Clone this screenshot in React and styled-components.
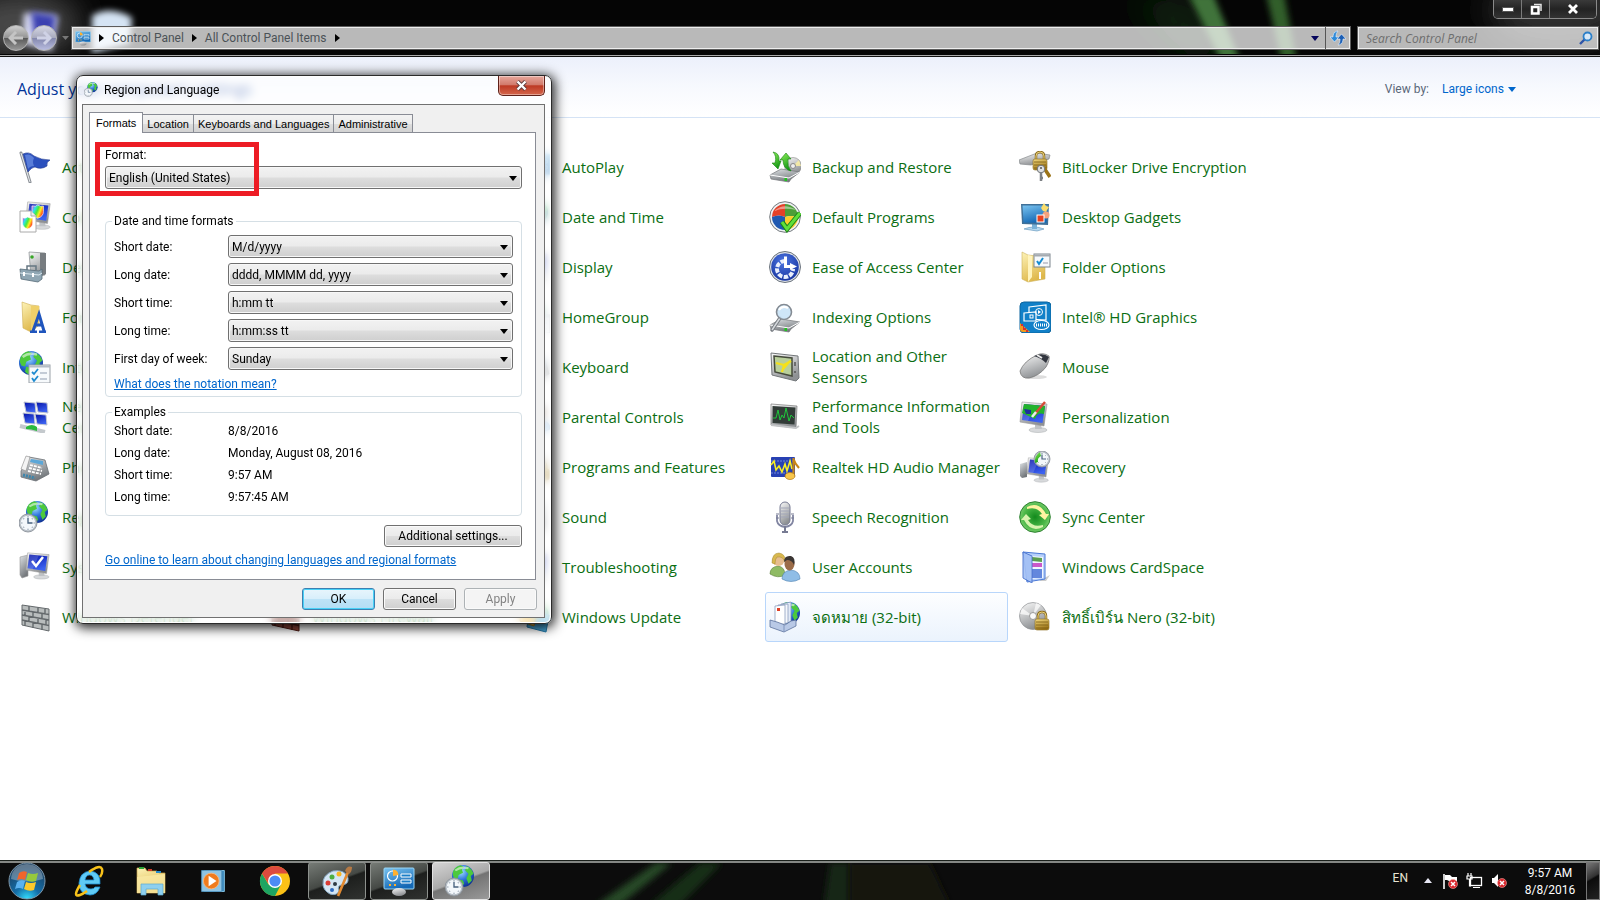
import React from "react";
import styled, { createGlobalStyle, css } from "styled-components";

const UI_FONT = '"Open Sans", "Noto Sans", sans-serif';
const SMALL_FONT = 'Roboto, "Open Sans", sans-serif';

const GlobalStyle = createGlobalStyle`
  *, *::before, *::after { box-sizing: border-box; }
  body { margin: 0; background: #fff; font-family: ${SMALL_FONT}; }
  button, input, select { font-family: inherit; }
`;

const Desktop = styled.div`
  position: relative;
  display: flex;
  flex-direction: column;
  min-height: 100vh;
  overflow: hidden;
`;

/* ---------- Explorer window frame ---------- */

const Frame = styled.header`
  position: relative;
  display: flex;
  flex-direction: column;
  background: #050505;
  border-bottom: 1px solid #111;
  box-shadow: inset 0 -1px 0 #a9a9a9;
  padding-bottom: 6px;
`;

const Aurora = styled.svg`
  position: absolute;
  left: 0;
  top: 0;
  width: 100%;
  height: calc(100% - ${(p) => p.$inset || 0}px);
  margin-top: ${(p) => p.$top || 0}px;
`;

const FrameTop = styled.div`
  position: relative;
  display: flex;
  justify-content: flex-end;
  height: 26px;
  padding-right: 3px;
`;

const WindowControls = styled.div`
  display: flex;
  height: 19px;
  border: 1px solid #8a8a8a;
  border-top: 0;
  border-radius: 0 0 5px 5px;
  overflow: hidden;
`;

const ControlButton = styled.button`
  display: flex;
  align-items: center;
  justify-content: center;
  width: ${(p) => (p.$wide ? "46px" : "28px")};
  padding: 0;
  border: 0;
  border-right: ${(p) => (p.$wide ? "0" : "1px solid #7a7a7a")};
  background: linear-gradient(#3a3a3a, #232323 50%, #333);
`;

const FrameBar = styled.div`
  position: relative;
  display: flex;
  align-items: center;
  height: 24px;
`;

const NavButtons = styled.div`
  display: flex;
  align-items: center;
  gap: 2px;
  width: 71px;
  flex: none;
  padding-left: 3px;
`;

const RoundButton = styled.button`
  display: flex;
  align-items: center;
  justify-content: center;
  width: 26px;
  height: 26px;
  padding: 0;
  border: 1px solid #b5b5b5;
  border-radius: 50%;
  background: ${(p) =>
    p.$tinted
      ? "linear-gradient(#d6d8e4, #a9abc0 48%, #8488ae 52%, #b9bde0)"
      : "linear-gradient(#cfcfcf, #949494 48%, #5a5a5a 52%, #989898)"};
`;

const PlainButton = styled.button`
  display: flex;
  align-items: center;
  justify-content: center;
  width: 12px;
  height: 20px;
  padding: 0;
  border: 0;
  background: none;
`;

const glassField = css`
  display: flex;
  align-items: center;
  height: 24px;
  border: 1px solid #5c5c5c;
  box-shadow: inset 0 0 0 1px #eee;
  background: rgba(255, 255, 255, 0.72);
`;

const AddressBar = styled.nav`
  ${glassField}
  flex: 1;
  padding-left: 3px;
  margin-right: 6px;
`;

const Crumb = styled.a`
  color: #4b5257;
  font-size: 12px;
  line-height: 16px;
  text-decoration: none;
  white-space: nowrap;
`;

const CrumbArrow = styled.span`
  display: flex;
  justify-content: center;
  width: 21px;
`;

const Spacer = styled.div`
  flex: 1;
`;

const RefreshButton = styled.button`
  display: flex;
  align-items: center;
  justify-content: center;
  width: 25px;
  height: 22px;
  margin-left: 4px;
  padding: 0;
  border: 0;
  border-left: 1px solid #555;
  background: none;
`;

const SearchBox = styled.label`
  ${glassField}
  width: 242px;
  margin-right: 1px;
  padding: 0 5px 0 8px;
`;

const SearchInput = styled.input`
  flex: 1;
  min-width: 0;
  padding: 0;
  border: 0;
  outline: 0;
  background: none;
  font-family: ${UI_FONT};
  font-size: 12px;
  font-style: italic;
  &::placeholder { color: #6e6e6e; opacity: 1; }
`;

/* ---------- Control panel content ---------- */

const Content = styled.main`
  flex: 1;
  background: #fff;
`;

const Heading = styled.div`
  display: flex;
  align-items: center;
  height: 61px;
  padding: 3px 82px 0 17px;
  border-bottom: 1px solid #d5e3f5;
  background: linear-gradient(#ecf0fb, #f7f9fe 50%, #fff);
`;

const Title = styled.h1`
  flex: 1;
  margin: 0;
  color: #003399;
  font-family: ${UI_FONT};
  font-size: 16px;
  font-weight: 400;
  line-height: 22px;
`;

const ViewLabel = styled.label`
  margin-right: 13px;
  color: #5a6779;
  font-size: 12px;
`;

const ViewPicker = styled.div`
  position: relative;
  display: flex;
  align-items: center;
`;

const ViewSelect = styled.select`
  appearance: none;
  width: 76px;
  padding: 0;
  border: 0;
  background: none;
  color: #0066cc;
  font-size: 12px;
`;

const OverArrow = styled.svg`
  position: absolute;
  right: ${(p) => p.$right}px;
  top: calc(50% - 2px);
  pointer-events: none;
`;

const ItemGrid = styled.ul`
  display: grid;
  grid-template-columns: repeat(5, 250px);
  grid-auto-rows: 50px;
  margin: 0;
  padding: 24px 0 0 15px;
  list-style: none;
`;

const Item = styled.a`
  display: flex;
  align-items: center;
  gap: 11px;
  width: 243px;
  height: 50px;
  padding: 0 4px 0 3px;
  border: 1px solid ${(p) => (p.$selected ? "#b8d6fb" : "transparent")};
  border-radius: 3px;
  background: ${(p) => (p.$selected ? "linear-gradient(#fdfeff, #ebf3fd)" : "none")};
  color: #0b6e12;
  font-family: ${UI_FONT};
  font-size: 15px;
  line-height: 21px;
  text-decoration: none;
  svg { flex: none; }
`;

/* ---------- Dialog ---------- */

const Dialog = styled.section`
  position: absolute;
  left: 76px;
  top: 75px;
  width: 476px;
  padding: 0 6px 5px 5px;
  border: 1px solid #2b2b2b;
  border-radius: 7px;
  background: rgba(255, 255, 255, 0.6);
  backdrop-filter: blur(4px);
  box-shadow: inset 0 0 0 1px #fff, 1px 2px 12px 2px rgba(0, 0, 0, 0.85);
`;

const TitleBar = styled.div`
  display: flex;
  align-items: flex-start;
  height: 28px;
  padding: 6px 0 0 2px;
`;

const DialogTitle = styled.h2`
  flex: 1;
  margin: 0 0 0 5px;
  color: #000;
  font-size: 12px;
  font-weight: 400;
  line-height: 16px;
`;

const CloseButton = styled.button`
  display: flex;
  align-items: center;
  justify-content: center;
  width: 47px;
  height: 20px;
  margin-top: -6px;
  padding: 0;
  border: 1px solid #5f2019;
  border-top: 0;
  border-radius: 0 0 5px 5px;
  background: linear-gradient(#e7a79c, #d27b6c 45%, #bd3a24 52%, #d4664c);
  box-shadow: inset 0 0 0 1px rgba(255, 255, 255, 0.4);
`;

const Client = styled.div`
  padding: 7px 7px 7px 6px;
  border: 1px solid #717171;
  background: #f0f0f0;
`;

const TabStrip = styled.div`
  position: relative;
  z-index: 1;
  display: flex;
  align-items: flex-end;
  height: 21px;
`;

const Tab = styled.button`
  height: ${(p) => (p.$active ? "21px" : "18px")};
  margin-right: -1px;
  margin-bottom: ${(p) => (p.$active ? "0" : "1px")};
  padding: 0 ${(p) => (p.$active ? "6px" : "4px")};
  border: 1px solid #898c95;
  border-bottom: 0;
  background: ${(p) => (p.$active ? "#fff" : "linear-gradient(#f3f3f3, #ececec 50%, #dedede 52%, #d2d2d2)")};
  font-family: "Liberation Sans", sans-serif;
  font-size: 11px;
  line-height: 16px;
  white-space: nowrap;
`;

const TabPanel = styled.div`
  display: flex;
  flex-direction: column;
  margin: -1px 1px 0 0;
  padding: 14px 13px 11px 15px;
  border: 1px solid #898c95;
  background: #fff;
  font-size: 12px;
  line-height: 16px;
`;

const FormatField = styled.div`
  position: relative;
  display: flex;
  flex-direction: column;
  gap: 3px;
`;

const Marker = styled.div`
  position: absolute;
  left: -10px;
  top: -5px;
  width: 164px;
  height: 54px;
  border: 5px solid #ed1c24;
  pointer-events: none;
`;

const Combo = styled.div`
  position: relative;
  flex: 1;
`;

const ComboSelect = styled.select`
  appearance: none;
  display: block;
  width: 100%;
  height: 23px;
  padding: 0 20px 0 3px;
  border: 1px solid #707070;
  border-radius: 3px;
  background: linear-gradient(#f2f2f2, #ebebeb 48%, #dddddd 52%, #cfcfcf);
  box-shadow: inset 0 0 0 1px #f7f7f7;
  color: #000;
  font-size: 12px;
`;

const Group = styled.fieldset`
  position: relative;
  min-width: 0;
  margin: ${(p) => p.$gap}px 0 0;
  padding: ${(p) => (p.$dense ? "0 8px 7px" : "6px 8px 4px")};
  border: 1px solid #d5dfe5;
  border-radius: 4px;
`;

const Legend = styled.legend`
  margin-left: -2px;
  padding: 0 2px;
  line-height: 16px;
`;

const FieldRow = styled.div`
  display: flex;
  align-items: center;
  margin-bottom: 5px;
`;

const FieldLabel = styled.label`
  width: 114px;
`;

const Examples = styled.dl`
  display: grid;
  grid-template-columns: 114px 1fr;
  margin: 0;
  line-height: 22px;
  dd { margin: 0; }
`;

const HelpLink = styled.a`
  align-self: flex-start;
  display: block;
  margin-top: ${(p) => p.$gap}px;
  color: #0066cc;
  line-height: 16px;
  white-space: nowrap;
`;

const PushButton = styled.button`
  width: ${(p) => (p.$wide ? "138px" : "73px")};
  height: 22px;
  padding: 0;
  border: 1px solid ${(p) => (p.$primary ? "#3c7fb1" : p.disabled ? "#adb2b5" : "#707070")};
  border-radius: 3px;
  background: ${(p) =>
    p.$primary
      ? "linear-gradient(#e8f5fc, #d8effb 48%, #bde3f7 52%, #b3def5)"
      : p.disabled
      ? "#f4f4f4"
      : "linear-gradient(#f2f2f2, #ebebeb 48%, #dddddd 52%, #cfcfcf)"};
  box-shadow: ${(p) => (p.$primary ? "inset 0 0 0 1px #48d1f7" : "inset 0 0 0 1px #fafafa")};
  color: ${(p) => (p.disabled ? "#838383" : "#000")};
  font-size: 12px;
  line-height: 16px;
`;

const PanelAction = styled.div`
  display: flex;
  justify-content: flex-end;
  margin-top: 9px;
`;

const Actions = styled.div`
  display: flex;
  justify-content: flex-end;
  gap: 8px;
  margin-top: 8px;
`;

/* ---------- Taskbar ---------- */

const Taskbar = styled.footer`
  position: relative;
  display: flex;
  height: 40px;
  border-top: 1px solid #1b211c;
  background: #0c0c0c;
  box-shadow: inset 0 2px 0 #858885;
`;

const TaskRow = styled.div`
  position: relative;
  display: flex;
  flex: 1;
  align-items: center;
  gap: 4px;
`;

const StartButton = styled.button`
  width: 56px;
  height: 39px;
  padding: 0 0 0 8px;
  border: 0;
  background: none;
  svg { display: block; }
`;

const TaskButton = styled.button`
  display: flex;
  align-items: center;
  justify-content: center;
  width: 58px;
  height: 38px;
  padding: 0;
  border: 1px solid transparent;
  border-radius: 3px;
  background: none;
  ${(p) =>
    p.$state === "open" &&
    css`
      border-color: #8d918d;
      background: linear-gradient(160deg, #767b76, #454945 48%, #1d1f1d 52%, #303230);
    `}
  ${(p) =>
    p.$state === "active" &&
    css`
      border-color: #e2e2e2;
      background: linear-gradient(160deg, #d4d4d4, #a9a9a9 48%, #737373 52%, #9a9a9a);
    `}
`;

const Tray = styled.div`
  position: relative;
  display: flex;
  align-items: center;
  color: #fff;
  font-size: 12px;
  line-height: 17px;
`;

const Language = styled.span`
  margin: -4px 16px 0 0;
  color: #e8e4d4;
`;

const TrayIcons = styled.div`
  display: flex;
  align-items: center;
  gap: 7px;
`;

const Clock = styled.time`
  width: 62px;
  margin: 3px 5px 0 11px;
  text-align: center;
`;

const ShowDesktop = styled.button`
  width: 14px;
  height: 38px;
  padding: 0;
  border: 1px solid #777;
  background: linear-gradient(150deg, #777, #333 40%, #0c0c0c 45%, #222);
`;

/* ---------- Icons ---------- */

const Gradient = ({ id, from, to }) => (
  <linearGradient id={id} x1="0" y1="0" x2=".4" y2="1">
    <stop offset="0" stopColor={from} />
    <stop offset="1" stopColor={to} />
  </linearGradient>
);

const DefsSvg = styled.svg`
  position: absolute;
`;

const SharedDefs = () => (
  <DefsSvg width="0" height="0" aria-hidden="true">
    <defs>
      <Gradient id="screen" from="#0512a8" to="#3c62f0" />
      <Gradient id="silver" from="#fbfbfb" to="#8e9194" />
      <Gradient id="steel" from="#dfe3e6" to="#75797d" />
      <Gradient id="folder" from="#fdf3b8" to="#dfb84b" />
      <Gradient id="gold" from="#f5dc82" to="#9c7417" />
      <Gradient id="blue" from="#79c3f0" to="#1569b5" />
      <Gradient id="green" from="#8ff05a" to="#189a17" />
      <linearGradient id="rainbow" x1="0" x2="1" y1="0" y2=".5">
        <stop offset="0" stopColor="#ff2ad0" />
        <stop offset=".3" stopColor="#2de0f0" />
        <stop offset=".55" stopColor="#4dea35" />
        <stop offset=".75" stopColor="#ffee22" />
        <stop offset="1" stopColor="#ff3a1c" />
      </linearGradient>
      <radialGradient id="ball" cx=".4" cy=".3" r=".75">
        <stop offset="0" stopColor="#a6e6ff" />
        <stop offset=".5" stopColor="#2f74dc" />
        <stop offset="1" stopColor="#0b2b8c" />
      </radialGradient>
      <radialGradient id="orb" cx=".5" cy="1" r=".9">
        <stop offset="0" stopColor="#35e0ff" />
        <stop offset=".4" stopColor="#146ea8" />
        <stop offset="1" stopColor="#1b3f60" />
      </radialGradient>
      <radialGradient id="access" cx=".45" cy=".3" r=".8">
        <stop offset="0" stopColor="#4b74e0" />
        <stop offset="1" stopColor="#132f9a" />
      </radialGradient>
      <radialGradient id="sync" cx=".5" cy=".5" r=".6">
        <stop offset="0" stopColor="#128a1c" />
        <stop offset=".6" stopColor="#4cb848" />
        <stop offset="1" stopColor="#8fd97d" />
      </radialGradient>
      <filter id="soft" x="-150%" y="-150%" width="400%" height="400%"><feGaussianBlur stdDeviation="3" /></filter>
      <filter id="haze" x="-150%" y="-150%" width="400%" height="400%"><feGaussianBlur stdDeviation="16" /></filter>
    </defs>
  </DefsSvg>
);

const Globe = ({ x, y, r }) => (
  <g transform={`translate(${x} ${y}) scale(${r / 10})`}>
    <circle r="10" fill="url(#ball)" />
    <path d="M-9-4Q-7-9-2-9.700L1-8-1-6 0-3-4-1-5 3-8 2Q-10-1-9-4ZM3-9Q8-7 9.500-2L7 0 8 4 5 7 3 2 5-2 2-5ZM-4 3L0 4 1 7-1 9.500Q-4 9-5 7Z" fill="#4cc93c" />
    <path d="M-7-5Q-2-9 5-7" stroke="#fff" strokeOpacity=".55" strokeWidth="2" fill="none" />
  </g>
);

const ClockFace = ({ x, y, r }) => (
  <g transform={`translate(${x} ${y}) scale(${r / 8})`}>
    <circle r="8" fill="#b9c0c8" stroke="#8b929a" strokeWidth=".8" />
    <circle r="6.500" fill="#f3f7fb" />
    <path d="M0-6V-5M0 5V6M-6 0H-5M5 0H6M-4-4L-3.500-3.500M4-4L3.500-3.500M-4 4L-3.500 3.500M4 4L3.500 3.500" stroke="#778799" />
    <path d="M0-4.500V0H4" stroke="#48617e" strokeWidth="1.200" fill="none" />
  </g>
);

const Monitor = ({ fill = "url(#screen)" }) => (
  <g>
    <ellipse cx="19" cy="29" rx="9" ry="2.500" fill="#d7d9db" stroke="#a7aaad" strokeWidth=".5" />
    <path d="M16 23L22 24 23 28H16Z" fill="#bfc2c5" />
    <path d="M3 1L28 3 25 25 1 21Z" fill="url(#silver)" stroke="#999" strokeWidth=".6" />
    <path d="M5 3L26 5 23.500 22 3 19Z" fill={fill} />
    <path d="M5 3L16 4 9 20 3 19Z" fill="#fff" opacity=".16" />
  </g>
);

const Drive = () => (
  <g>
    <path d="M1 24L12 18 31 21 22 28 20 31 2 28Z" fill="url(#steel)" stroke="#737679" strokeWidth=".7" />
    <path d="M1 24L20 27 31 21" stroke="#fff" fill="none" />
    <rect x="15.500" y="27" width="2.500" height="3" fill="#21c421" />
  </g>
);

const Padlock = ({ x, y }) => (
  <g transform={`translate(${x} ${y})`}>
    <path d="M3 8V5Q3 1 7 1T11 5V8" fill="none" stroke="#8c6d20" strokeWidth="2.500" />
    <path d="M3 8V5Q3 1 7 1T11 5V8" fill="none" stroke="#ead279" strokeWidth="1" />
    <rect y="8" width="14" height="11" rx="2" fill="url(#gold)" stroke="#8c6d20" strokeWidth=".6" />
    <path d="M1 11H13M1 14H13M1 17H13" stroke="#795b12" strokeWidth=".8" />
  </g>
);

const Shield = ({ x, y, s = 1 }) => (
  <path transform={`translate(${x} ${y}) scale(${s})`} d="M0 1Q4 2 6 0 9 2 12 1V7Q12 12 6 14 0 12 0 7Z" fill="url(#rainbow)" stroke="#fff" strokeWidth=".7" />
);

const Bricks = ({ fill, stroke }) => (
  <g>
    <path d="M3 4L30 8V30L3 24Z" fill={fill} stroke={stroke} />
    <path d="M3 9L30 13.500M3 14L30 19M3 19L30 24.500M10 5V10M19 6.500V11.500M26 8V13M6 9.500V14.500M14 11V16M23 12.500V17.500M10 15V20M19 17V22M27 18V24M6 20V25M14 21.500V27M23 23.500V29" stroke={stroke} strokeWidth="1.400" />
  </g>
);

const PanelArt = () => (
  <g>
    <rect x="1" y="3" width="30" height="21" rx="1" fill="url(#blue)" stroke="#9bd5f3" />
    <circle cx="9.500" cy="11" r="5" fill="none" stroke="#fff" strokeWidth="1.200" />
    <path d="M10 11V4.500A6 6 0 0 1 15.500 10Z" fill="#ffb02e" />
    <path d="M18 9H28V12H18ZM18 15H28V18H18Z" fill="#1a7fc8" stroke="#fff" />
    <path d="M6 20H8M11 20H13" stroke="#ffb02e" strokeWidth="2" />
    <ellipse cx="16" cy="27" rx="7" ry="4" fill="url(#silver)" />
  </g>
);

const art = {
  flag: (
    <g>
      <path d="M2 2L11 31" stroke="#8d9298" strokeWidth="3" strokeLinecap="round" />
      <path d="M2 2L11 31" stroke="#e8ebee" strokeWidth="1" />
      <path d="M4 3Q10 0 15 5 22 9 31 9 27 11 28 15 22 19 16 16 13 16 9 21Z" fill="#2b50bd" stroke="#1c368d" strokeWidth=".6" />
      <path d="M6 4Q11 2 15 7 13 11 15 15 11 15 9 18Z" fill="#789be9" opacity=".6" />
    </g>
  ),
  color: (
    <g>
      <g transform="translate(6 0) scale(.9)"><Monitor /></g>
      <Shield x="13" y="4" s=".95" />
      <path d="M1 10H12L17 15V31H1Z" fill="#fff" stroke="#aaa" />
      <path d="M12 10V15H17" fill="#eee" stroke="#aaa" />
      <Shield x="3.500" y="16" s=".85" />
    </g>
  ),
  device: (
    <g>
      <path d="M10 1L26 2V24L12 26Z" fill="url(#silver)" stroke="#84898d" strokeWidth=".7" />
      <path d="M21 2L27 2V23L21 25Z" fill="#777c80" />
      <circle cx="13" cy="6" r="1.800" fill="#39a628" />
      <path d="M8 19V15H17V19" stroke="#667782" strokeWidth="1.500" fill="none" />
      <path d="M1 18L20 20 23 18V28L19 31 2 28Z" fill="#8fa6b3" stroke="#576b77" strokeWidth=".8" />
      <path d="M1 22L20 24 23 22" stroke="#dce9f0" fill="none" />
      <path d="M5 21V25M14 22V26" stroke="#fff" strokeWidth="2" />
    </g>
  ),
  fonts: (
    <g>
      <path d="M3 1L12 4 20 5 20 24 12 31 4 27Z" fill="url(#folder)" stroke="#cfae54" strokeWidth=".6" />
      <path d="M12 5V31L20 24V5Z" fill="#efd06a" />
      <path d="M11 31H18M20 31H27M14 30L20 13 25 30M16 24H23" stroke="#1f55bd" strokeWidth="3" fill="none" />
    </g>
  ),
  internet: (
    <g>
      <Globe x={12} y={12} r={12} />
      <rect x="10" y="14" width="21" height="18" fill="#f7fafc" stroke="#9aa1a8" />
      <path d="M10 15.500H31" stroke="#b5bdc5" strokeWidth="2" />
      <path d="M13 21L15 23 19 18M13 27L15 30 19 25" stroke="#1e8bd0" strokeWidth="1.800" fill="none" />
      <path d="M21 22H28M21 28H28" stroke="#8f9db0" />
    </g>
  ),
  network: (
    <g>
      {[[5, 1], [17, 1], [4, 12], [16, 13]].map(([x, y]) => (
        <path key={`${x}-${y}`} d={`M${x} ${y}l11 1 1 10-10-1z`} fill="url(#screen)" stroke="#c4c9d4" />
      ))}
      <path d="M1 25L26 31" stroke="#c4c9cd" strokeWidth="4" />
      <path d="M7 26Q13 22 18 26V30Q12 28 7 28Z" fill="#29ba3d" />
    </g>
  ),
  phone: (
    <g>
      <path d="M2 20L10 6 26 9 30 23 17 30 2 26Z" fill="url(#steel)" stroke="#696e73" strokeWidth=".8" />
      <path d="M12 8L24 10 24 14 11 11Z" fill="#5ba7d8" />
      <path d="M2 18L7 5 11 6 7 20Z" fill="#f4f4f4" stroke="#888" strokeWidth=".6" />
      <path d="M11 14L23 17M10 17L23 20M9 20L22 23" stroke="#fff" strokeWidth="1.800" strokeDasharray="3 1" />
      <path d="M4 24L16 27" stroke="#3c86ad" strokeWidth="3" strokeDasharray="2 1" />
    </g>
  ),
  region: (
    <g>
      <Globe x={18} y={11} r={11} />
      <ClockFace x={9} y={22} r={9} />
    </g>
  ),
  system: (
    <g>
      <path d="M1 6L9 4V25L3 27 1 24Z" fill="url(#steel)" stroke="#999" strokeWidth=".6" />
      <g transform="translate(6 1) scale(.86)"><Monitor /></g>
      <path d="M13 10L17 15 24 6" stroke="#fff" strokeWidth="2.500" fill="none" />
    </g>
  ),
  defender: <Bricks fill="#b9bdbd" stroke="#63686b" />,
  firewall: <Bricks fill="#94473b" stroke="#4f1c15" />,
  update: (
    <g>
      <path d="M10 10L30 14 27 31 8 26Z" fill="#4aa9da" stroke="#247daf" />
      <path d="M2 5L18 9 15 25 1 20Z" fill="#f3c14c" stroke="#b6841c" />
      <path d="M18 5A8 8 0 0 1 28 13" stroke="#39a941" strokeWidth="3" fill="none" />
    </g>
  ),
  display: <Monitor />,
  generic: <PanelArt />,
  sound: (
    <g>
      <rect x="9" y="2" width="16" height="28" rx="2" fill="url(#steel)" />
      <circle cx="17" cy="20" r="6" fill="#444" />
      <circle cx="17" cy="8" r="3" fill="#555" />
    </g>
  ),
  backup: (
    <g>
      <circle cx="24" cy="15" r="8.500" fill="url(#silver)" stroke="#888" strokeWidth=".6" />
      <path d="M24 15L30 9 32 15Z" fill="#fff2a0" opacity=".8" />
      <circle cx="24" cy="15" r="2.500" fill="#eee" stroke="#888" />
      <Drive />
      <path d="M4 1Q11 2 10 10H12L9 18 3 12H6Q8 5 4 1Z" fill="url(#green)" stroke="#158211" strokeWidth=".6" />
      <path d="M17 2L22 8 19 8Q18 15 22 20 14 18 14 9L11 9Z" fill="url(#green)" stroke="#158211" strokeWidth=".6" />
    </g>
  ),
  defaults: (
    <g>
      <circle cx="16" cy="16" r="15.300" fill="#eef1f3" stroke="#74797d" />
      <path d="M16 16V3A13 13 0 0 0 3 16Q10 13 16 16Z" fill="#e44128" />
      <path d="M16 16V3A13 13 0 0 1 29 16Q22 14 16 16Z" fill="#4d9e38" />
      <path d="M16 16V29A13 13 0 0 1 3 16Q10 13 16 16Z" fill="#1f59b1" />
      <path d="M16 16V29A13 13 0 0 0 29 16Q22 14 16 16Z" fill="#fbcf2c" />
      <path d="M5 10Q15 1 27 9 15 6 5 10Z" fill="#fff" opacity=".45" />
      <path d="M13 21L18 28 31 12" stroke="#1c8419" strokeWidth="5" fill="none" />
      <path d="M13 21L18 28 31 12" stroke="#5fe03a" strokeWidth="3" fill="none" />
    </g>
  ),
  ease: (
    <g>
      <circle cx="16" cy="16" r="15.500" fill="#dfe3e8" stroke="#6b737d" />
      <circle cx="16" cy="16" r="13.800" fill="url(#access)" />
      <path d="M16 10A8 8 0 1 0 24 18" fill="none" stroke="#e9effc" strokeWidth="4" strokeDasharray="4.500 1.400" />
      <path d="M16.500 5.500V15.500H22" stroke="#fff" strokeWidth="3" fill="none" />
      <path d="M21 12L28 15.500 21 19Z" fill="#fff" />
    </g>
  ),
  indexing: (
    <g>
      <Drive />
      <path d="M11 17L3 29" stroke="#777c82" strokeWidth="3.500" strokeLinecap="round" />
      <path d="M11 17L3 29" stroke="#d6dade" strokeWidth="1.500" />
      <circle cx="15" cy="11" r="7.500" fill="#c9e3f7" fillOpacity=".9" stroke="#848b93" strokeWidth="1.600" />
      <path d="M10 9Q13 4 19 7" stroke="#fff" strokeWidth="2" fill="none" />
    </g>
  ),
  location: (
    <g>
      <path d="M2 2L29 5 30 27 27 30 3 24Z" fill="url(#silver)" stroke="#73777a" />
      <path d="M5 5L23 7V25L6 21Z" fill="#b9cf9b" stroke="#454b3b" strokeWidth="1.500" />
      <path d="M7 12L15 14 22 10M15 14L13 21M14 18L21 10" stroke="#f5e11a" strokeWidth="2.200" fill="none" />
      <path d="M26 11V15M26 20V22" stroke="#555" strokeWidth="1.500" />
    </g>
  ),
  performance: (
    <g>
      <path d="M2 3L28 5 27 27 2 24Z" fill="url(#silver)" stroke="#777" strokeWidth=".7" />
      <path d="M3.500 5L26.500 6.500 25.500 23.500 3.500 22Z" fill="#323c38" />
      <path d="M4 17L7 17 9 9 11 19 13 14 15 17 17 7 20 20 22 14 25 17" stroke="#1fc73c" strokeWidth="1" fill="none" />
      <path d="M2 24L27 27 30 25" stroke="#c2c4c6" strokeWidth="1.800" fill="none" />
    </g>
  ),
  realtek: (
    <g>
      <rect x="2" y="6" width="24" height="20" rx="1" fill="#2740b3" />
      <path d="M2 10H26M2 22H26" stroke="#7386dc" strokeDasharray="2 1" />
      <path d="M2 14L5 10 7 19 10 15 13 21 16 13 18 20 21 10 23 18" stroke="#f7ee24" strokeWidth="1.600" fill="none" />
      <path d="M24.500 7V24M24.500 8Q26 13 30 17" stroke="#c88618" strokeWidth="2.200" fill="none" />
      <ellipse cx="21" cy="25" rx="5" ry="3.500" fill="#f8c64b" stroke="#b5770e" strokeWidth=".7" />
    </g>
  ),
  speech: (
    <g>
      <path d="M8 14V20Q9 25 16 26 23 25 24 20V14" stroke="#8286a2" strokeWidth="1.800" fill="none" />
      <path d="M16 25V30M13 31H19" stroke="#777b93" strokeWidth="2" />
      <rect x="11" y="1" width="10" height="23" rx="5" fill="url(#silver)" stroke="#777b93" />
      <path d="M12 7H20M12 10H20M12 13H20M12 16H20" stroke="#a2a5b8" strokeWidth="1.200" />
      <path d="M7 13H10M22 13H25M7 17H10M22 17H25" stroke="#777b93" />
    </g>
  ),
  users: (
    <g>
      <path d="M1 23Q1 16 9 15 16 16 16 24 9 28 1 23Z" fill="#8fbb64" stroke="#587d35" strokeWidth=".6" />
      <circle cx="9.500" cy="9" r="6" fill="#e6bd8f" />
      <path d="M3 12Q3 2 10 2 17 3 16 11 14 5 8 6 6 8 6 13Z" fill="#d8b84f" stroke="#a38528" strokeWidth=".5" />
      <path d="M13 28Q13 20 22 19 31 20 31 28 22 33 13 28Z" fill="#8fbde6" stroke="#4c7fb0" strokeWidth=".6" />
      <ellipse cx="20.500" cy="13" rx="5" ry="6.500" fill="#9b6c49" />
      <path d="M15 11Q15 4 22 5 27 7 25 14 23 9 18 9Z" fill="#3b3634" />
    </g>
  ),
  mail: (
    <g>
      <Globe x={20} y={12} r={11} />
      <path d="M12 3L22 1V21L12 23Z" fill="#e2eaf6" stroke="#7d91b4" strokeWidth=".7" />
      <path d="M9 4L19 3V22L9 23Z" fill="#f4f7fc" stroke="#7d91b4" strokeWidth=".7" />
      <path d="M6 5L16 4V23L6 24Z" fill="#fff" stroke="#7d91b4" strokeWidth=".7" />
      <rect x="8" y="7" width="3" height="3" fill="#e04026" />
      <path d="M1 19L8 21 16 24 22 20 27 19 27 25 15 31 1 26Z" fill="#b9c9e6" stroke="#5c719c" strokeWidth=".8" />
      <path d="M15 31V24" stroke="#8095bd" />
    </g>
  ),
  bitlocker: (
    <g>
      <path d="M0 9L18 2 31 4 30 8 12 14 1 13Z" fill="url(#silver)" stroke="#85898d" strokeWidth=".7" />
      <Padlock x={14} y={0} />
      <path d="M25 17L31 26" stroke="#9b7317" strokeWidth="3.500" />
      <circle cx="22" cy="18" r="3.800" fill="#dfe2e5" stroke="#6d7175" />
      <path d="M22 21V30M22 27H24" stroke="#7d8185" strokeWidth="2.500" />
      <circle cx="22" cy="17" r="1" fill="#555" />
    </g>
  ),
  gadgets: (
    <g>
      <path d="M5 28Q15 24 25 28L18 30Z" fill="#b5d8ee" stroke="#5a91b8" strokeWidth=".6" />
      <rect x="13" y="22" width="5" height="6" fill="#79b1d7" />
      <path d="M2 3L30 3 29 24 3 23Z" fill="#3f7098" />
      <path d="M3.500 4.500L28.500 4.500 27.500 22 4.500 21.500Z" fill="url(#blue)" />
      <path d="M25 2L27 5 30 6 28 9 27 11 24 10 22 7Z" fill="#f8dc6b" />
      <circle cx="27" cy="14" r="3.500" fill="#f3a27d" />
      <rect x="18" y="14" width="7" height="7" fill="#e7411f" stroke="#fff" />
    </g>
  ),
  folderOptions: (
    <g>
      <path d="M3 1L9 4 26 6V28L9 31 3 28Z" fill="url(#folder)" stroke="#cdb15c" strokeWidth=".6" />
      <path d="M9 4V31L13 26V5Z" fill="#fff4be" />
      <rect x="15" y="3" width="16" height="13" fill="#f6f9fc" stroke="#7d858d" />
      <path d="M15 4.500H31" stroke="#a5aab0" strokeWidth="2" />
      <path d="M18 10L20 13 24 7" stroke="#168cd1" strokeWidth="2" fill="none" />
      <path d="M24 12H29" stroke="#99a" />
      <path d="M21 21V28" stroke="#fff" strokeWidth="2" />
    </g>
  ),
  intel: (
    <g>
      <rect x="1" y="1" width="31" height="31" rx="4" fill="#1180c8" stroke="#0c659e" />
      <path d="M1 22L11 31H4Q1 31 1 28Z" fill="#f29b1d" />
      <path d="M2 24H4M4 28H7M7 30H9M4 26H5" stroke="#d92f2f" strokeWidth="2" />
      <path d="M10 6L27 4V19L10 18Z" fill="none" stroke="#fff" strokeWidth="1.200" />
      <path d="M5 12L17 11V20H5Z" fill="#1180c8" stroke="#fff" strokeWidth="1.200" />
      <circle cx="20" cy="11" r="3.500" fill="none" stroke="#fff" />
      <path d="M19 9L22 11 19 13Z" fill="#fff" />
      <rect x="11" y="14" width="3" height="3" fill="none" stroke="#fff" />
      <ellipse cx="22.500" cy="24" rx="7.500" ry="4.500" fill="none" stroke="#fff" strokeWidth="1.200" />
      <path d="M17 24H28" stroke="#fff" strokeWidth="3" strokeDasharray="1 1" />
    </g>
  ),
  mouse: (
    <g>
      <ellipse cx="16" cy="26" rx="12" ry="2" fill="#ddd" />
      <path d="M1 20Q5 10 18 4 24 1 30 5 31 9 27 16 20 25 10 27 2 28 1 20Z" fill="url(#silver)" stroke="#777" strokeWidth=".8" />
      <path d="M15 5Q24 1 30 6L27 12Q22 7 15 5Z" fill="#32363f" />
      <path d="M18 4L23 7" stroke="#eee" strokeWidth="2" />
    </g>
  ),
  personalization: (
    <g>
      <Monitor />
      <path d="M5 3L26 5 25 13Q18 11 16 18L3 12Z" fill="#22b32c" />
      <path d="M5 8L12 9 12 13 7 13Z" fill="#1b2f9c" />
      <path d="M26 1L15 14" stroke="#d64b37" strokeWidth="2.500" />
      <path d="M17 11L13 16" stroke="#e9edf1" strokeWidth="2.500" />
    </g>
  ),
  recovery: (
    <g>
      <path d="M1 13L8 11V26L3 27 1 25Z" fill="url(#steel)" />
      <g transform="translate(7 6) scale(.8)"><Monitor /></g>
      <ClockFace x={23} y={8} r={8} />
      <path d="M16 12Q15 5 21 1L22 5Q18 7 19 11Z" fill="url(#green)" />
    </g>
  ),
  sync: (
    <g>
      <circle cx="16" cy="16" r="15.300" fill="url(#sync)" stroke="#2b7f2e" />
      <path d="M8 6Q20 0 27 13L30 13 26 19 20 14 23 13Q18 5 8 8Z" fill="#fff3a1" />
      <path d="M24 26Q12 32 5 19L2 19 7 13 12 18 9 19Q14 27 24 24Z" fill="#d8f3ae" />
    </g>
  ),
  cardspace: (
    <g>
      <path d="M20 30L31 24 27 30Z" fill="#ccc" />
      <path d="M4 1L26 3V28L8 31Z" fill="#b6d0fa" stroke="#4b79d6" />
      <path d="M12 5L24 6V27L12 28Z" fill="#f1f6ff" />
      <path d="M13 6L23 7V11L13 10Z" fill="#5b9f4f" />
      <path d="M13 12L23 12V16L13 16Z" fill="#cb58c9" />
      <path d="M13 18H23V27H13Z" fill="#6387dd" />
      <path d="M4 1L13 5V32L4 27Z" fill="#a3c0f5" stroke="#4671cd" opacity=".9" />
    </g>
  ),
  nero: (
    <g>
      <circle cx="14" cy="15" r="13.500" fill="url(#silver)" stroke="#8c8f92" strokeWidth=".7" />
      <path d="M14 15L3 7 1 13ZM14 15L17 2 22 4Z" fill="#fff" opacity=".7" />
      <circle cx="14" cy="15" r="3.500" fill="#fafafa" stroke="#999" />
      <Padlock x={16} y={10} />
    </g>
  ),
  folderTask: (
    <g>
      <path d="M2 3H10L12 6H22L24 8H30V28H2Z" fill="url(#folder)" stroke="#c7a54b" strokeWidth=".7" />
      <path d="M4 3H9" stroke="#2aa338" strokeWidth="2" />
      <path d="M13 5H17" stroke="#ce3a28" strokeWidth="2" />
      <path d="M21 7H26" stroke="#2388cb" strokeWidth="2" />
      <path d="M2 12L30 9V28H2Z" fill="#f9e9a4" opacity=".8" />
      <path d="M6 30V19H28V30H23V24H11V30Z" fill="#8fd0ef" stroke="#5ba9cf" strokeWidth=".7" />
    </g>
  ),
  ie: (
    <g>
      <path d="M27 19H12Q13 24 18 24 21 24 22 22H27Q24 30 17 30 6 29 6 18 7 7 17 6 28 7 27 19ZM12 15H21Q20 10 16.500 10 13 10 12 15Z" fill="#5fcbf5" stroke="#1d8ed2" strokeWidth=".8" />
      <path d="M7 20Q-1 33 7 30 10 29 14 26M16 7Q27-1 29 4 30 8 27 12" stroke="#f8c21a" strokeWidth="2.500" fill="none" />
    </g>
  ),
  media: (
    <g>
      <path d="M6 4H29V28H6Z" fill="#3c89bd" stroke="#8ccbea" />
      <path d="M3 4H26V28H3Z" fill="#8fc4e3" stroke="#5194bd" />
      <circle cx="14" cy="16" r="9" fill="#f07b1d" stroke="#f8b77d" />
      <path d="M11 10L20 16 11 22Z" fill="#fff" />
    </g>
  ),
  chrome: (
    <g>
      <circle cx="16" cy="16" r="15" fill="#fbc116" />
      <path d="M3 8.500A15 15 0 0 0 16 31L22 19.500 9.500 19.500Z" fill="#1da462" />
      <path d="M3 8.500A15 15 0 0 1 29 8.500H16L9 18Z" fill="#dd4b3e" />
      <circle cx="16" cy="16" r="7" fill="#fff" />
      <circle cx="16" cy="16" r="5.600" fill="#4c8bf5" />
    </g>
  ),
  paint: (
    <g>
      <path d="M2 20Q1 10 12 6 24 4 27 13 28 20 20 20 16 21 18 26 16 31 9 29 3 26 2 20Z" fill="#d4e6f4" stroke="#87a9c3" />
      <circle cx="7" cy="18" r="2.500" fill="#d93d35" />
      <circle cx="11" cy="12" r="2.500" fill="#4dae41" />
      <circle cx="18" cy="9" r="2.500" fill="#f7b523" />
      <circle cx="14" cy="19" r="2" fill="#2d3a44" />
      <circle cx="11" cy="25" r="2" fill="#2b69c0" />
      <path d="M17 31L27 7" stroke="#e28a31" strokeWidth="2.600" />
      <path d="M24 6Q26 0 31 2 31 7 28 9Z" fill="#b57a45" />
    </g>
  ),
};

const Icon = ({ name, size = 32 }) => (
  <svg width={size} height={size} viewBox="0 0 32 32" fill="none" aria-hidden="true">
    {art[name]}
  </svg>
);

const RightArrow = () => (
  <svg width="5" height="8" viewBox="0 0 5 8"><path d="M0 0L5 4 0 8Z" fill="#000" /></svg>
);

const DownArrow = ({ color = "#000", right }) => (
  <OverArrow $right={right} width="8" height="5" viewBox="0 0 8 5">
    <path d="M0 0H8L4 5Z" fill={color} />
  </OverArrow>
);

const RedBadge = ({ x, y }) => (
  <g transform={`translate(${x} ${y})`}>
    <circle r="4.500" fill="#d8262c" stroke="#f3a4a0" strokeWidth=".6" />
    <path d="M-2-2L2 2M2-2L-2 2" stroke="#fff" strokeWidth="1.500" />
  </g>
);

/* ---------- Data ---------- */

const ITEMS = [
  ["Action Center", "flag"], ["Administrative Tools", "generic"], ["AutoPlay", "generic"], ["Backup and Restore", "backup"], ["BitLocker Drive Encryption", "bitlocker"],
  ["Color Management", "color"], ["Credential Manager", "generic"], ["Date and Time", "region"], ["Default Programs", "defaults"], ["Desktop Gadgets", "gadgets"],
  ["Device Manager", "device"], ["Devices and Printers", "generic"], ["Display", "display"], ["Ease of Access Center", "ease"], ["Folder Options", "folderOptions"],
  ["Fonts", "fonts"], ["Getting Started", "generic"], ["HomeGroup", "internet"], ["Indexing Options", "indexing"], ["Intel® HD Graphics", "intel"],
  ["Internet Options", "internet"], ["Java", "generic"], ["Keyboard", "phone"], ["Location and Other Sensors", "location"], ["Mouse", "mouse"],
  ["Network and Sharing Center", "network"], ["Notification Area Icons", "generic"], ["Parental Controls", "users"], ["Performance Information and Tools", "performance"], ["Personalization", "personalization"],
  ["Phone and Modem", "phone"], ["Power Options", "generic"], ["Programs and Features", "nero"], ["Realtek HD Audio Manager", "realtek"], ["Recovery", "recovery"],
  ["Region and Language", "region"], ["RemoteApp and Desktop", "generic"], ["Sound", "sound"], ["Speech Recognition", "speech"], ["Sync Center", "sync"],
  ["System", "system"], ["Taskbar and Start Menu", "generic"], ["Troubleshooting", "display"], ["User Accounts", "users"], ["Windows CardSpace", "cardspace"],
  ["Windows Defender", "defender"], ["Windows Firewall", "firewall"], ["Windows Update", "update"], ["จดหมาย (32-bit)", "mail"], ["สิทธิ์เบิร์น Nero (32-bit)", "nero"],
];

const FORMATS = [
  ["short-date", "Short date:", "M/d/yyyy"],
  ["long-date", "Long date:", "dddd, MMMM dd, yyyy"],
  ["short-time", "Short time:", "h:mm tt"],
  ["long-time", "Long time:", "h:mm:ss tt"],
  ["first-day", "First day of week:", "Sunday"],
];

const EXAMPLES = [
  ["Short date:", "8/8/2016"],
  ["Long date:", "Monday, August 08, 2016"],
  ["Short time:", "9:57 AM"],
  ["Long time:", "9:57:45 AM"],
];

const TABS = ["Formats", "Location", "Keyboards and Languages", "Administrative"];

const TASKS = [
  ["Internet Explorer", "ie"],
  ["Windows Explorer", "folderTask"],
  ["Media Player", "media", "", 28],
  ["Chrome", "chrome"],
  ["Paint", "paint", "open"],
  ["Control Panel", "generic", "open"],
  ["Region and Language", "region", "active"],
];

const ComboBox = ({ id, value }) => (
  <Combo>
    <ComboSelect id={id} defaultValue={value}>
      <option>{value}</option>
    </ComboSelect>
    <DownArrow right={5} />
  </Combo>
);

/* ---------- Sections ---------- */

const ExplorerFrame = () => (
  <Frame>
    <Aurora $inset={2} viewBox="0 0 1600 55" preserveAspectRatio="none" aria-hidden="true">
      <ellipse cx="20" cy="25" rx="60" ry="34" fill="#4a4a4a" filter="url(#haze)" />
      <ellipse cx="1560" cy="10" rx="70" ry="34" fill="#333" filter="url(#haze)" />
      <path d="M1130 0H1190L1222 57H1190Z" fill="#10280f" filter="url(#haze)" />
      <path d="M24 13L58 16 52 52 22 44Z" fill="#d8daf2" filter="url(#soft)" />
      <path d="M31 12L56 16 52 42 34 36Z" fill="#3a3fb0" filter="url(#soft)" />
      <path d="M92 16Q110 5 132 18L130 44 92 54Z" fill="#d5e4f4" filter="url(#soft)" />
      <path d="M1188-6H1213L1241 64H1222Z" fill="#41733b" filter="url(#soft)" />
      <path d="M1266-6H1284L1297 64H1282Z" fill="#315f2c" filter="url(#soft)" />
    </Aurora>
    <FrameTop>
      <WindowControls>
        <ControlButton aria-label="Minimize">
          <svg width="12" height="5" viewBox="0 0 12 5"><rect x=".500" y=".500" width="11" height="4" fill="#fff" stroke="#555" /></svg>
        </ControlButton>
        <ControlButton aria-label="Restore">
          <svg width="12" height="12" viewBox="0 0 12 12" fill="none"><path d="M4 1.500H11V8" stroke="#e4e4e4" strokeWidth="1.500" /><rect x="2" y="4" width="6.500" height="6.500" stroke="#fff" strokeWidth="2.500" /></svg>
        </ControlButton>
        <ControlButton $wide aria-label="Close">
          <svg width="12" height="10" viewBox="0 0 12 10"><path d="M2 1L10 9M10 1L2 9" stroke="#fff" strokeWidth="2.800" /></svg>
        </ControlButton>
      </WindowControls>
    </FrameTop>
    <FrameBar>
      <NavButtons>
        <RoundButton aria-label="Back">
          <svg width="16" height="14" viewBox="0 0 16 14"><path d="M8 1L2 7 8 13M2 7H15" stroke="#c4c4c4" strokeWidth="3" fill="none" /></svg>
        </RoundButton>
        <RoundButton $tinted aria-label="Forward">
          <svg width="16" height="14" viewBox="0 0 16 14"><path d="M8 1L14 7 8 13M14 7H1" stroke="#cfd2e6" strokeWidth="3" fill="none" /></svg>
        </RoundButton>
        <PlainButton aria-label="Recent pages">
          <svg width="7" height="4" viewBox="0 0 7 4"><path d="M0 0H7L3.500 4Z" fill="#777" /></svg>
        </PlainButton>
      </NavButtons>
      <AddressBar aria-label="Address">
        <Icon name="generic" size={16} />
        <CrumbArrow><RightArrow /></CrumbArrow>
        <Crumb href="#control-panel">Control Panel</Crumb>
        <CrumbArrow><RightArrow /></CrumbArrow>
        <Crumb href="#all-items">All Control Panel Items</Crumb>
        <CrumbArrow><RightArrow /></CrumbArrow>
        <Spacer />
        <PlainButton aria-label="Previous locations">
          <svg width="8" height="5" viewBox="0 0 8 5"><path d="M0 0H8L4 5Z" fill="#05055c" /></svg>
        </PlainButton>
        <RefreshButton aria-label="Refresh">
          <svg width="16" height="16" viewBox="0 0 16 16">
            <path d="M7 1Q3 2 3 6V7H0L4.500 12 9 7H6V6Q6 3 8 1Z" fill="#2f8ad8" stroke="#eef6ff" strokeWidth=".6" />
            <path d="M9 15Q13 14 13 10V9H16L11.500 4 7 9H10V10Q10 13 8 15Z" fill="#1c5fb4" stroke="#eef6ff" strokeWidth=".6" />
          </svg>
        </RefreshButton>
      </AddressBar>
      <SearchBox>
        <SearchInput type="search" aria-label="Search Control Panel" placeholder="Search Control Panel" />
        <svg width="14" height="14" viewBox="0 0 14 14" fill="none">
          <path d="M6 8L1 13" stroke="#2f55a8" strokeWidth="2.400" />
          <circle cx="8.500" cy="5.500" r="4" stroke="#2c7fc8" strokeWidth="1.800" fill="#d9e9f8" />
        </svg>
      </SearchBox>
    </FrameBar>
  </Frame>
);

const RegionDialog = () => (
  <Dialog role="dialog" aria-labelledby="dialog-title">
    <TitleBar>
      <Icon name="region" size={15} />
      <DialogTitle id="dialog-title">Region and Language</DialogTitle>
      <CloseButton aria-label="Close">
        <svg width="13" height="11" viewBox="0 0 13 11">
          <path d="M2.500 1.500L10.500 9.500M10.500 1.500L2.500 9.500" stroke="#5b3a3a" strokeWidth="4" />
          <path d="M2.500 1.500L10.500 9.500M10.500 1.500L2.500 9.500" stroke="#fff" strokeWidth="2.400" />
        </svg>
      </CloseButton>
    </TitleBar>
    <Client>
      <TabStrip role="tablist">
        {TABS.map((name, i) => (
          <Tab key={name} role="tab" aria-selected={i === 0} $active={i === 0}>{name}</Tab>
        ))}
      </TabStrip>
      <TabPanel role="tabpanel">
        <FormatField>
          <label htmlFor="format">Format:</label>
          <ComboBox id="format" value="English (United States)" />
          <Marker />
        </FormatField>
        <Group $gap={24}>
          <Legend>Date and time formats</Legend>
          {FORMATS.map(([id, label, value]) => (
            <FieldRow key={id}>
              <FieldLabel htmlFor={id}>{label}</FieldLabel>
              <ComboBox id={id} value={value} />
            </FieldRow>
          ))}
          <HelpLink href="#notation" $gap={6}>What does the notation mean?</HelpLink>
        </Group>
        <Group $gap={7} $dense>
          <Legend>Examples</Legend>
          <Examples>
            {EXAMPLES.map(([term, value]) => (
              <React.Fragment key={term}>
                <dt>{term}</dt>
                <dd>{value}</dd>
              </React.Fragment>
            ))}
          </Examples>
        </Group>
        <PanelAction>
          <PushButton $wide>Additional settings...</PushButton>
        </PanelAction>
        <HelpLink href="#online" $gap={5}>Go online to learn about changing languages and regional formats</HelpLink>
      </TabPanel>
      <Actions>
        <PushButton $primary>OK</PushButton>
        <PushButton>Cancel</PushButton>
        <PushButton disabled>Apply</PushButton>
      </Actions>
    </Client>
  </Dialog>
);

const BottomBar = () => (
  <Taskbar>
    <Aurora $inset={2} $top={2} viewBox="0 0 1600 37" preserveAspectRatio="none" aria-hidden="true">
      <path d="M596 42L656 0H672L620 42Z" fill="#284a28" filter="url(#soft)" />
      <path d="M650 42L700 0H722L680 42Z" fill="#172f18" filter="url(#soft)" />
      <path d="M824 42L830 0H850V42Z" fill="#152515" filter="url(#soft)" />
      <path d="M850 0H930L950 42H850Z" fill="#121711" filter="url(#soft)" />
    </Aurora>
    <TaskRow>
      <StartButton aria-label="Start">
        <svg width="38" height="38" viewBox="0 0 38 38">
          <circle cx="19" cy="19" r="18" fill="url(#orb)" stroke="#7f98ab" />
          <path d="M3 17Q4 3 19 2 34 3 35 17 19 22 3 17Z" fill="#fff" opacity=".3" />
          <path d="M11 11Q15 8 19 10L17 18Q13 16 9 18Z" fill="#f0652c" />
          <path d="M20 11Q25 13 30 11L28 19Q23 21 18 18Z" fill="#97c93c" />
          <path d="M9 20Q13 17 17 19L15 27Q11 25 7 27Z" fill="#5ab2f0" />
          <path d="M18 20Q23 22 28 20L26 28Q21 30 16 27Z" fill="#fcc92b" />
        </svg>
      </StartButton>
      {TASKS.map(([label, name, state, size]) => (
        <TaskButton key={label} $state={state} aria-label={label}>
          <Icon name={name} size={size || 32} />
        </TaskButton>
      ))}
    </TaskRow>
    <Tray>
      <Language>EN</Language>
      <TrayIcons>
        <svg width="8" height="5" viewBox="0 0 8 5"><path d="M0 5L4 0 8 5Z" fill="#e8e8f4" /></svg>
        <svg width="19" height="18" viewBox="0 0 19 18">
          <path d="M5 2V17" stroke="#fff" strokeWidth="1.600" />
          <path d="M6 3H11L13 5H18V9H10L8 8H6Z" fill="#fff" />
          <RedBadge x={14} y={12} />
        </svg>
        <svg width="18" height="18" viewBox="0 0 18 18" fill="none">
          <rect x="5.500" y="5.500" width="11" height="8" stroke="#fff" strokeWidth="1.300" />
          <path d="M8 15.500H15M3 1V4M6 1V4M2 4H7V7H2ZM4.500 7V14H6" stroke="#fff" strokeWidth="1.200" />
        </svg>
        <svg width="18" height="18" viewBox="0 0 18 18">
          <path d="M2 6H4L8 2V15L4 11H2Z" fill="#fff" />
          <RedBadge x={12} y={11} />
        </svg>
      </TrayIcons>
      <Clock dateTime="2016-08-08T09:57">
        9:57 AM
        <br />
        8/8/2016
      </Clock>
      <ShowDesktop aria-label="Show desktop" />
    </Tray>
  </Taskbar>
);

export default function App() {
  return (
    <Desktop>
      <GlobalStyle />
      <SharedDefs />
      <ExplorerFrame />
      <Content>
        <Heading>
          <Title>Adjust your computer’s settings</Title>
          <ViewLabel htmlFor="view">View by:</ViewLabel>
          <ViewPicker>
            <ViewSelect id="view" defaultValue="Large icons">
              <option>Large icons</option>
            </ViewSelect>
            <DownArrow right={2} color="#0066cc" />
          </ViewPicker>
        </Heading>
        <ItemGrid>
          {ITEMS.map(([label, icon]) => (
            <li key={label}>
              <Item href="#item" $selected={icon === "mail"}>
                <Icon name={icon} />
                {label}
              </Item>
            </li>
          ))}
        </ItemGrid>
      </Content>
      <RegionDialog />
      <BottomBar />
    </Desktop>
  );
}
